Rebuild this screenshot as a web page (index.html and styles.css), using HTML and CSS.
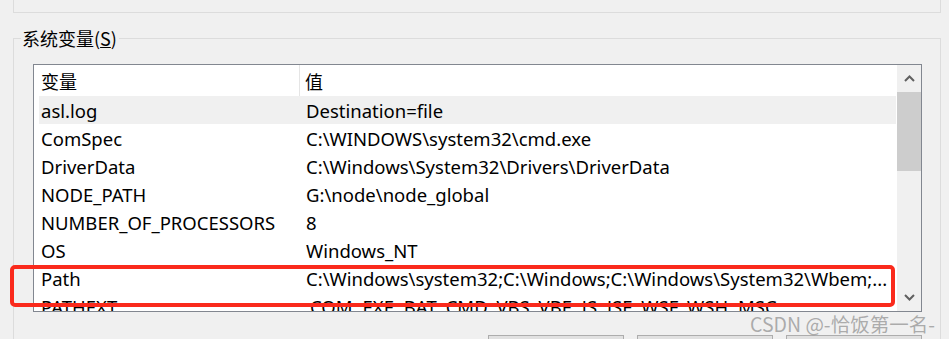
FILE: index.html
```html
<!DOCTYPE html>
<html lang="zh-CN">
<head>
<meta charset="UTF-8">
<title>系统变量</title>
<link rel="stylesheet" href="styles.css">
</head>
<body>
  <div class="user-group"></div>

  <fieldset class="sys-group">
    <legend>系统变量(<u>S</u>)</legend>

    <div class="listbox">
      <div class="list-body">
        <div class="list-head">
          <div class="col-name">变量</div>
          <div class="col-value">值</div>
        </div>
        <div class="row selected"><span class="col-name">asl.log</span><span class="col-value">Destination=file</span></div>
        <div class="row"><span class="col-name">ComSpec</span><span class="col-value">C:\WINDOWS\system32\cmd.exe</span></div>
        <div class="row"><span class="col-name">DriverData</span><span class="col-value">C:\Windows\System32\Drivers\DriverData</span></div>
        <div class="row"><span class="col-name">NODE_PATH</span><span class="col-value">G:\node\node_global</span></div>
        <div class="row"><span class="col-name">NUMBER_OF_PROCESSORS</span><span class="col-value">8</span></div>
        <div class="row"><span class="col-name">OS</span><span class="col-value">Windows_NT</span></div>
        <div class="row"><span class="col-name">Path</span><span class="col-value">C:\Windows\system32;C:\Windows;C:\Windows\System32\Wbem;...</span></div>
        <div class="row"><span class="col-name">PATHEXT</span><span class="col-value">.COM;.EXE;.BAT;.CMD;.VBS;.VBE;.JS;.JSE;.WSF;.WSH;.MSC</span></div>
      </div>
      <div class="scrollbar">
        <div class="sb-btn">
          <svg width="11" height="7" viewBox="0 0 11 7"><polyline points="1,6 5.5,1.5 10,6" fill="none" stroke="#606060" stroke-width="2"/></svg>
        </div>
        <div class="sb-thumb"></div>
        <div class="sb-track"></div>
        <div class="sb-btn">
          <svg width="11" height="7" viewBox="0 0 11 7"><polyline points="1,1 5.5,5.5 10,1" fill="none" stroke="#606060" stroke-width="2"/></svg>
        </div>
      </div>
    </div>

    <div class="buttons">
      <button>新建(W)...</button>
      <button>编辑(I)...</button>
      <button>删除(L)</button>
    </div>
  </fieldset>

  <div class="highlight"></div>
  <div class="watermark">CSDN @-恰饭第一名-</div>
</body>
</html>
```

FILE: styles.css
```css
body {
  margin: 0;
  padding: 0 8px 0 13px;
  width: 949px;
  height: 339px;
  box-sizing: border-box;
  overflow: hidden;
  position: relative;
  background: #f0f0f0;
  font-family: "Noto Sans", "Noto Sans CJK SC", sans-serif;
  font-size: 18.5px;
  color: #000;
}

.user-group {
  height: 13px;
  border: 1px solid #dcdcdc;
  border-top: none;
  box-sizing: border-box;
}

.sys-group {
  margin: 15px 0 0 0;
  padding: 16px 18px 0 19px;
  border: 1px solid #dcdcdc;
  height: 400px;
  box-sizing: border-box;
}

.sys-group legend {
  margin-left: -12px;
  padding: 0 2px 0 1px;
  line-height: 20px;
  font-size: 18px;
  font-family: "Noto Sans CJK SC", sans-serif;
}

.listbox {
  display: flex;
  height: 248px;
  border: 1px solid #828790;
  background: #fff;
  box-sizing: border-box;
}

.list-body {
  flex: 1;
  overflow: hidden;
}

.list-head {
  display: flex;
  height: 31px;
  align-items: center;
}

.list-head .col-name {
  width: 266px;
  padding-left: 7px;
  box-sizing: border-box;
  border-right: 1px solid #e5e5e5;
  height: 100%;
  display: flex;
  align-items: center;
  font-size: 18px;
  font-family: "Noto Sans CJK SC", sans-serif;
}

.list-head .col-value {
  padding-left: 5px;
  font-size: 18px;
  font-family: "Noto Sans CJK SC", sans-serif;
}

.row {
  display: flex;
  align-items: center;
  height: 28px;
  margin-left: 5px;
  white-space: nowrap;
}

.row.selected {
  background: #f0f0f0;
}

.row .col-name {
  width: 267px;
  padding-left: 2px;
  box-sizing: border-box;
}

.scrollbar {
  width: 24px;
  margin-left: 1px;
  display: flex;
  flex-direction: column;
  background: #f0f0f0;
}

.sb-btn {
  height: 27px;
  display: flex;
  align-items: center;
  justify-content: center;
}

.sb-thumb {
  height: 79px;
  background: #cdcdcd;
}

.sb-track {
  flex: 1;
}

.buttons {
  display: flex;
  justify-content: flex-end;
  gap: 13px;
  margin-top: 23px;
}

.buttons button {
  width: 136px;
  height: 30px;
  border: 1px solid #adadad;
  background: #e1e1e1;
  font: inherit;
}

.highlight {
  position: absolute;
  left: 10px;
  top: 265px;
  width: 885px;
  height: 42px;
  border: 4px solid #fa2a1c;
  border-radius: 5px;
  box-sizing: border-box;
}

.watermark {
  position: absolute;
  left: 750px;
  top: 309px;
  font-family: "Noto Sans CJK SC", sans-serif;
  font-size: 19.5px;
  color: rgba(140, 140, 140, 0.7);
  white-space: nowrap;
}
```
